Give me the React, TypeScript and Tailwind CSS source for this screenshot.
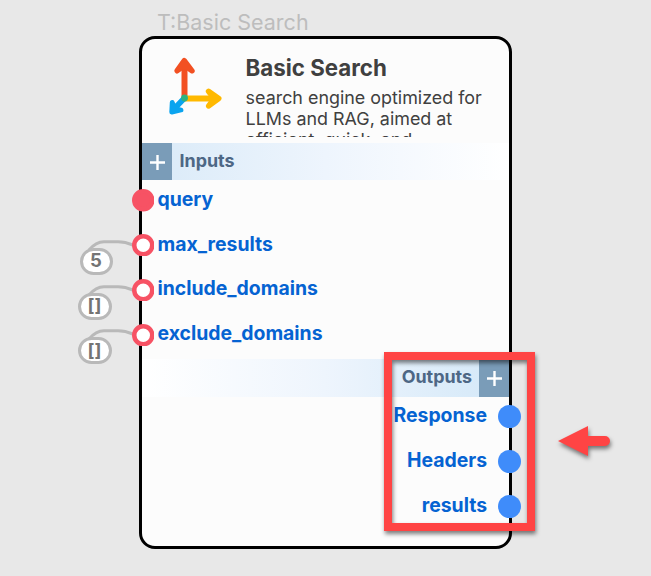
import React from "react";

const inputs = [
  { name: "query" },
  { name: "max_results", value: "5" },
  { name: "include_domains", value: "[]" },
  { name: "exclude_domains", value: "[]" },
];
const outputs = ["Response", "Headers", "results"];

function AddButton() {
  return (
    <button className="flex h-full w-[30px] items-center justify-center bg-[#7a9cb8]" aria-label="Add">
      <svg width="16" height="16" viewBox="0 0 16 16" stroke="#fff" strokeWidth="2.4" className="mt-[1px]">
        <path d="M8.5 1v15M1 8.5h15" />
      </svg>
    </button>
  );
}

function AxesIcon() {
  return (
    <svg width="60" height="64" viewBox="0 0 60 64" fill="none" strokeLinecap="round" strokeLinejoin="round">
      <path d="M17.5 43V12" stroke="#f25022" strokeWidth="6" />
      <path d="M10 17.8 17.3 7.6 25 17.8 17.5 12.5Z" fill="#f25022" stroke="#f25022" strokeWidth="5.4" />
      <path d="M17.5 45.5H48" stroke="#ffb900" strokeWidth="6" />
      <path d="M41.5 38.3 51.8 45.5 41.5 53 47 45.5Z" fill="#ffb900" stroke="#ffb900" strokeWidth="5.4" />
      <path d="M17.5 45 8 55" stroke="#0aa4ef" strokeWidth="5.6" />
      <path d="M5.2 49.5 4.7 59.2 14 57 8 55.5Z" fill="#0aa4ef" stroke="#0aa4ef" strokeWidth="4.8" />
      <circle cx="17.5" cy="45" r="3.4" fill="#2eb380" />
    </svg>
  );
}

function DefaultValue({ value }: { value: string }) {
  return (
    <div className="absolute top-[11px] left-[-55px]">
      <svg width="62" height="20" viewBox="0 0 62 20" fill="none" stroke="#b9b9b9" strokeWidth="3">
        <path d="M12 16C17 10 21 7.7 27 7.7H41C47 7.7 50 8.5 56 11" />
      </svg>
      <span
        className={`absolute top-[14px] flex h-[27px] items-center justify-center rounded-full border-[3px] border-[#b9b9b9] bg-white text-[18.5px] font-bold text-[#747474] ${
          value === "5" ? "left-[3px] w-[33px]" : "left-[1px] w-[34px]"
        }`}
      >
        {value}
      </span>
    </div>
  );
}

export default function App() {
  return (
    <main className="relative h-[576px] w-[651px] overflow-hidden bg-[#e8e8e8] pt-[9px] pl-[139px] font-['Inter',sans-serif]">
      <p className="h-[27px] pl-[18px] text-[21.5px] leading-[27px] whitespace-nowrap text-[#bdbdbd]">T:Basic Search</p>
      <section className="flex h-[513px] w-[373px] flex-col rounded-[16px] border-[3px] border-black bg-[#fcfcfc]">
        <header className="flex h-[104px] pt-[14px] pl-[25px]">
          <AxesIcon />
          <div className="ml-[18.6px] h-[84px] w-[250px] overflow-hidden whitespace-nowrap text-[#404040]">
            <h1 className="h-[34px] text-[22.3px] leading-[30px] font-bold">Basic Search</h1>
            <p className="text-[17.9px] leading-[21px]">
              search engine optimized for
              <br />
              LLMs and RAG, aimed at
              <br />
              efficient, quick, and
            </p>
          </div>
        </header>

        <div className="flex h-[37px] shrink-0 bg-gradient-to-r from-[#d9eaf8] via-[#eef5fd] to-white">
          <AddButton />
          <h2 className="ml-[7.5px] text-[17.9px] leading-[35px] font-bold text-[#4d6785]">Inputs</h2>
        </div>
        <ul className="-mt-[2px] -ml-[10.5px] h-[179px] shrink-0">
          {inputs.map((p) => (
            <li key={p.name} className="relative flex h-[44.8px] items-center">
              {p.value && <DefaultValue value={p.value} />}
              <svg className="relative" width="22.5" height="22.5" viewBox="0 0 22.5 22.5" stroke="#f75264" strokeWidth="4.5">
                <circle cx="11.25" cy="11.25" r="9" fill={p.value ? "#fff" : "#f75264"} />
              </svg>
              <span className="-mt-[2px] ml-[3.5px] text-[19.4px] font-bold text-[#0563d2]">{p.name}</span>
            </li>
          ))}
        </ul>

        <div className="mt-[2px] flex h-[37.5px] shrink-0 justify-end bg-gradient-to-l from-[#d3e8f8] via-[#eef5fd] to-white">
          <h2 className="mr-[7px] text-[17.9px] leading-[35px] font-bold text-[#4d6785]">Outputs</h2>
          <AddButton />
        </div>
        <ul className="-mt-[2px] -mr-[12px]">
          {outputs.map((name) => (
            <li key={name} className="flex h-[44.8px] items-center justify-end">
              <span className="-mt-[2px] mr-[11px] text-[19.4px] font-bold text-[#0563d2]">{name}</span>
              <i className="size-[23px] rounded-full bg-[#3f8cfa]" />
            </li>
          ))}
        </ul>
      </section>

      <div className="absolute top-[352px] left-[384px] h-[179px] w-[151px] border-8 border-[#ff4444] [filter:drop-shadow(1px_3px_2px_rgba(0,0,0,0.5))]" />
      <svg
        className="absolute top-[420px] left-[552px] [filter:drop-shadow(1px_3px_2px_rgba(0,0,0,0.5))]"
        width="68"
        height="42"
        viewBox="0 0 68 42"
        fill="#ff4444"
      >
        <path d="M6 21 36 6v10h17a5 5 0 0 1 0 10H36v10Z" />
      </svg>
    </main>
  );
}
